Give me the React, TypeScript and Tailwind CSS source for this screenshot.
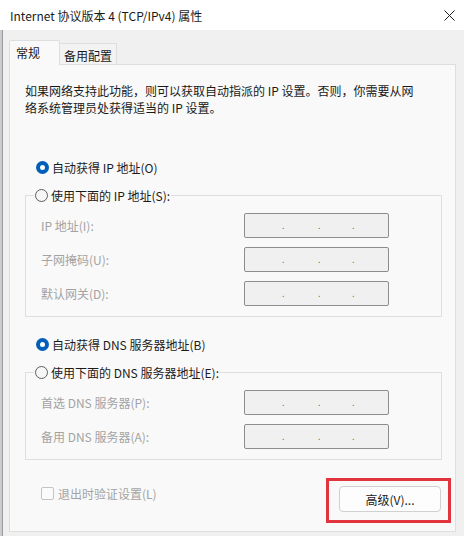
const font = { fontFamily: '"Noto Sans CJK SC", "Noto Sans", sans-serif' };

function Radio({ checked, label }: { checked?: boolean; label: string }) {
  return (
    <div className="flex items-center h-[17px]">
      {checked ? (
        <span className="w-[13px] h-[13px] rounded-full bg-[#005fb8] flex items-center justify-center">
          <span className="w-[5px] h-[5px] rounded-full bg-white" />
        </span>
      ) : (
        <span className="w-[13px] h-[13px] rounded-full border border-[#5d5d5d] bg-[#f6f6f6]" />
      )}
      <span className="ml-[3px] text-[12px] text-[#1b1b1b]">{label}</span>
    </div>
  );
}

function IpField({ label }: { label: string }) {
  return (
    <div className="flex items-center h-[25px]">
      <span className="w-[203px] text-[12px] text-[#a3a3a3]">{label}</span>
      <div className="w-[145px] h-[25px] rounded-[2px] border border-[#8d8d8d] bg-[#f0f0f0] flex items-center pl-[37px]">
        <span className="w-[36px] text-[9px] text-[#777]">.</span>
        <span className="w-[34px] text-[9px] text-[#777]">.</span>
        <span className="text-[9px] text-[#777]">.</span>
      </div>
    </div>
  );
}

function Group({ legend, fields }: { legend: string; fields: string[] }) {
  return (
    <fieldset className="border border-[#dedede] pl-[8px] pr-0 pb-[10px] w-[417px]">
      <legend className="px-[1px]">
        <Radio label={legend} />
      </legend>
      <div className="pl-[7px] pt-[9px] flex flex-col gap-[9px]">
        {fields.map((f) => (
          <IpField key={f} label={f} />
        ))}
      </div>
    </fieldset>
  );
}

export default function App() {
  return (
    <div className="w-[464px] h-[536px] bg-[#f0f0f0] flex flex-col leading-[17px]" style={font}>
      <div className="h-[30px] bg-white flex items-center justify-between pl-[10px] pr-[9px]">
        <span className="text-[12px] text-[#1a1a1a]">Internet 协议版本 4 (TCP/IPv4) 属性</span>
        <svg width="11" height="11" viewBox="0 0 11 11" className="text-[#222]">
          <path d="M0.5 0.5 L10.5 10.5 M10.5 0.5 L0.5 10.5" stroke="currentColor" strokeWidth="1" />
        </svg>
      </div>
      <div className="flex flex-1">
        <div className="w-[3px] bg-[#c9cdd2] border-r border-[#9a9a9a]" />
        <div className="flex flex-col pl-[6px] pt-[10px]">
          <div className="flex items-end">
            <div className="w-[51px] h-[25px] bg-[#f9f9f9] border border-b-0 border-[#dedede] rounded-t-[2px] pl-[6px] pt-[3px] text-[12px] text-[#1a1a1a] -mb-px relative z-10">
              常规
            </div>
            <div className="w-[57px] h-[21px] bg-[#f3f3f3] border-t border-r border-[#dedede] pl-[4px] pt-[3px] text-[12px] text-[#1a1a1a]">
              备用配置
            </div>
          </div>
          <div className="w-[447px] h-[468px] bg-[#f9f9f9] border border-[#dedede] pl-[15px] pt-[17px] flex flex-col">
            <p className="text-[12px] text-[#1a1a1a] leading-[17px]">
              如果网络支持此功能，则可以获取自动指派的 IP 设置。否则，你需要从网
              <br />
              络系统管理员处获得适当的 IP 设置。
            </p>
            <div className="mt-[43px] pl-[11px]">
              <Radio checked label="自动获得 IP 地址(O)" />
            </div>
            <div className="mt-[11px]">
              <Group legend="使用下面的 IP 地址(S):" fields={["IP 地址(I):", "子网掩码(U):", "默认网关(D):"]} />
            </div>
            <div className="mt-[19px] pl-[11px]">
              <Radio checked label="自动获得 DNS 服务器地址(B)" />
            </div>
            <div className="mt-[11px]">
              <Group legend="使用下面的 DNS 服务器地址(E):" fields={["首选 DNS 服务器(P):", "备用 DNS 服务器(A):"]} />
            </div>
            <div className="flex justify-between items-start pl-[16px] mt-[18px]">
              <div className="flex items-center mt-[7px]">
                <span className="w-[13px] h-[13px] rounded-[2px] border border-[#c4c4c4] bg-[#fbfbfb]" />
                <span className="ml-[4px] text-[12px] text-[#a3a3a3]">退出时验证设置(L)</span>
              </div>
              <div className="border-[3px] border-[#e2343c] pl-[10px] pr-[7px] pt-[5px] pb-[8px] mr-[4px]">
                <button className="w-[102px] h-[26px] rounded-[4px] border border-[#d0d0d0] bg-[#fdfdfd] text-[12px] text-[#1a1a1a]">
                  高级(V)...
                </button>
              </div>
            </div>
          </div>
        </div>
      </div>
    </div>
  );
}
